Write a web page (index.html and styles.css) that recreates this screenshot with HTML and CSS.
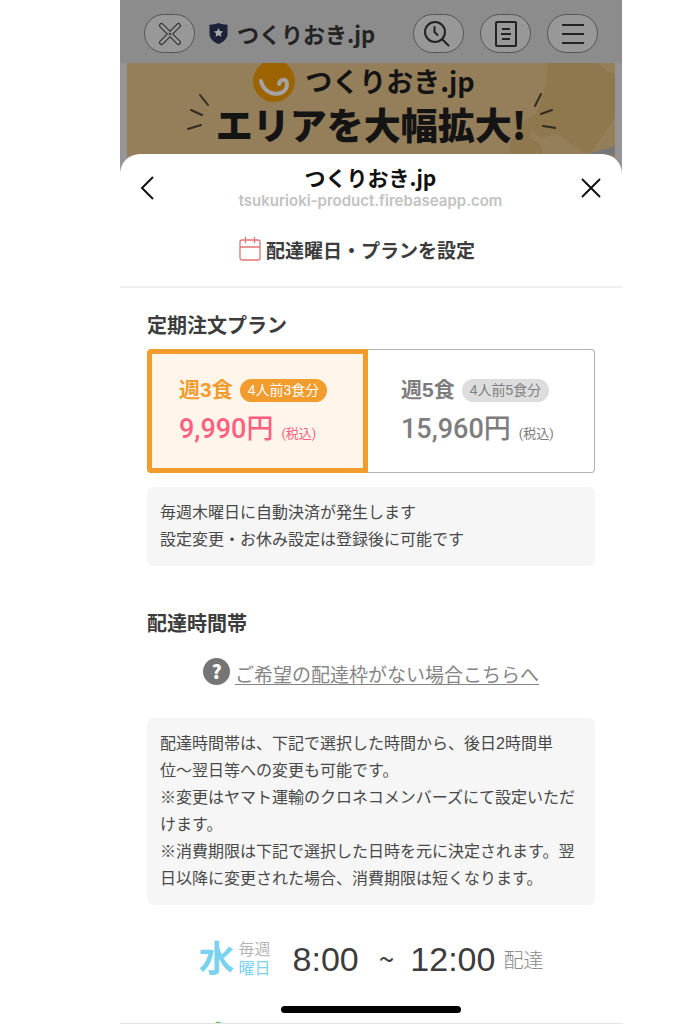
FILE: index.html
```html
<!DOCTYPE html>
<html lang="ja">
<head>
    <meta charset="UTF-8">
    <meta name="viewport" content="width=device-width, initial-scale=1.0">
    <title>つくりおき.jp</title>
    <link rel="stylesheet" href="styles.css">
</head>
<body>
    <div class="phone">
        <!-- 背面のページ -->
        <header class="topbar">
            <button class="pill" aria-label="閉じる">
                <svg width="24" height="24" viewBox="0 0 24 24" fill="none" stroke-linecap="round">
                    <path d="M3.500 3.500l17 17M20.500 3.500l-17 17" stroke="#333" stroke-width="5"/>
                    <path d="M3.500 3.500l17 17M20.500 3.500l-17 17" stroke="#9c9c9c" stroke-width="2.600"/>
                    <path d="M11 11l2 2M13 11l-2 2" stroke="#333" stroke-width="1"/>
                </svg>
            </button>
            <svg class="shield" width="19" height="21" viewBox="0 0 19 21">
                <path d="M9.500 0C12 1 15 1.500 18.500 1.800V11c0 4.500-4 8-9 10C4.500 19 .5 15.500.5 11V1.800C4 1.500 7 1 9.500 0z" fill="#1c2238"/>
                <path d="M9.500 5l1.400 3 3.300.4-2.400 2.200.6 3.200-2.900-1.600-2.900 1.600.6-3.200-2.400-2.200 3.300-.4z" fill="#aaa"/>
            </svg>
            <div class="site">つくりおき.jp</div>
            <button class="pill" aria-label="履歴検索">
                <svg width="30" height="26" viewBox="0 0 30 26" fill="none" stroke="#222" stroke-width="2" stroke-linecap="round">
                    <circle cx="11" cy="11" r="10"/>
                    <path d="M18.500 18.500l6 6M10.500 6v5l3 3"/>
                </svg>
            </button>
            <button class="pill" aria-label="注文一覧">
                <svg width="22" height="26" viewBox="0 0 22 26" fill="none" stroke="#222" stroke-width="2">
                    <rect x="1" y="1" width="20" height="24" rx="1"/>
                    <path d="M7 8h8M6 13h10M7 18h8"/>
                </svg>
            </button>
            <button class="pill" aria-label="メニュー">
                <svg width="22" height="22" viewBox="0 0 22 22" fill="none" stroke="#222" stroke-width="2">
                    <path d="M0 2h22M0 11h22M0 20h22"/>
                </svg>
            </button>
        </header>

        <div class="banner-wrap">
            <div class="banner">
                <svg class="banner-map" width="140" height="92" viewBox="0 0 140 92">
                    <path d="M72 0h50l10 8 8 3v44l-23 33-7 3-27-20-17 4-9-7-4 8c8 0 14 6 14 13l-2 11H36c-3-10-3-24 8-29-1-9 5-15 16-19 6-10 11-26 12-44z" fill="#8f774e"/>
                    <path d="M108 92l32-9v9z" fill="#777"/>
                </svg>
                <div class="banner-logo">
                    <svg width="42" height="42" viewBox="0 0 42 42">
                        <circle cx="21" cy="21" r="21" fill="#9c6400"/>
                        <path d="M8 21c3 16 26 17 26 3 0-6-7-5-8 0" fill="none" stroke="#a3a3a3" stroke-width="4" stroke-linecap="round"/>
                    </svg>
                    <span>つくりおき.jp</span>
                </div>
                <div class="banner-copy">
                    <svg width="24" height="38" viewBox="0 0 24 38" fill="none" stroke="#332c20" stroke-width="2" stroke-linecap="round">
                        <path d="M14 2l8 10M5 17l11 5M2 36l13-4"/>
                    </svg>
                    <span>エリアを大幅拡大!</span>
                    <svg width="24" height="38" viewBox="0 0 24 38" fill="none" stroke="#332c20" stroke-width="2" stroke-linecap="round">
                        <path d="M9 1L3 13M9 21l11-4M11 33l13 2"/>
                    </svg>
                </div>
            </div>
        </div>

        <!-- 前面のシート -->
        <main class="sheet">
            <div class="sheet-head">
                <button class="plain" aria-label="戻る">
                    <svg width="20" height="24" viewBox="0 0 20 24" fill="none" stroke="#111" stroke-width="2"><path d="M13 1L2 12l11 11"/></svg>
                </button>
                <div class="sheet-title">
                    <strong>つくりおき.jp</strong>
                    <span>tsukurioki-product.firebaseapp.com</span>
                </div>
                <button class="plain" aria-label="閉じる">
                    <svg width="20" height="20" viewBox="0 0 20 20" fill="none" stroke="#111" stroke-width="2"><path d="M1 1l18 18M19 1L1 19"/></svg>
                </button>
            </div>

            <h1>
                <svg width="22" height="24" viewBox="0 0 22 24" fill="none" stroke="#e27373" stroke-width="1.300">
                    <rect x="1" y="3" width="20" height="20" rx="2"/>
                    <path d="M1 10h20M6.500 0v6M15.500 0v6"/>
                </svg>
                配達曜日・プランを設定
            </h1>

            <div class="content">
                <h2>定期注文プラン</h2>
                <div class="plans">
                    <button class="plan selected">
                        <span class="plan-name">週3食 <span class="tag">4人前3食分</span></span>
                        <span class="price">9,990円 <small>(税込)</small></span>
                    </button>
                    <button class="plan">
                        <span class="plan-name">週5食 <span class="tag">4人前5食分</span></span>
                        <span class="price">15,960円 <small>(税込)</small></span>
                    </button>
                </div>
                <p class="note">毎週木曜日に自動決済が発生します<br>設定変更・お休み設定は登録後に可能です</p>

                <h2 class="time-title">配達時間帯</h2>
                <div class="help">
                    <span class="question">?</span>
                    <a href="#">ご希望の配達枠がない場合こちらへ</a>
                </div>
                <p class="note">配達時間帯は、下記で選択した時間から、後日2時間単<br>位〜翌日等への変更も可能です。<br>※変更はヤマト運輸のクロネコメンバーズにて設定いただけます。<br>※消費期限は下記で選択した日時を元に決定されます。翌日以降に変更された場合、消費期限は短くなります。</p>

                <div class="slot">
                    <span class="day">水</span>
                    <span class="weekly">毎週<b>曜日</b></span>
                    <span class="time">8:00</span>
                    <span class="tilde">~</span>
                    <span class="time">12:00</span>
                    <span class="deliver">配達</span>
                </div>
                <div class="slot next">
                    <span class="day">木</span>
                </div>
            </div>
        </main>
        <div class="home-bar"></div>
    </div>
</body>
</html>
```
FILE: styles.css
```css
* {
    margin: 0;
    padding: 0;
    box-sizing: border-box;
}

body {
    font-family: "Noto Sans CJK JP", sans-serif;
    color: #3c3c3c;
    background: #fff;
    padding: 0 61px 0 120px;
}

button {
    font-family: inherit;
    cursor: pointer;
}

svg {
    display: block;
    flex-shrink: 0;
}

.phone {
    position: relative;
    height: 100vh;
    overflow: hidden;
    background: #959595;
    border-bottom: 1px solid #e4e4e4;
}

/* 上部バー */
.topbar {
    display: flex;
    align-items: center;
    height: 63px;
    padding: 4px 24px 0;
    gap: 16px;
    background: #8c8c8c;
}

.pill {
    display: flex;
    align-items: center;
    justify-content: center;
    flex-shrink: 0;
    width: 51px;
    height: 39px;
    border: 1px solid #555;
    border-radius: 20px;
    background: #989898;
}

.shield {
    margin: 0 -7px 0 -2px;
}

.site {
    flex: 1;
    padding-bottom: 2px;
    font-size: 22px;
    font-weight: 700;
    line-height: 30px;
    color: #242424;
    white-space: nowrap;
}

/* バナー */
.banner-wrap {
    padding: 0 7px;
}

.banner {
    position: relative;
    height: 110px;
    margin-bottom: -19px;
    overflow: hidden;
    background: #957f5b;
    color: #141414;
}

.banner-map {
    position: absolute;
    top: 0;
    right: 0;
}

.banner-logo,
.banner-copy {
    position: relative;
    display: flex;
    justify-content: center;
    align-items: center;
}

.banner-logo {
    height: 36px;
    gap: 10px;
    padding-right: 14px;
    font-size: 27px;
    font-weight: 700;
    line-height: 36px;
}

.banner-copy {
    height: 50px;
    gap: 6px;
    font-size: 37px;
    font-weight: 900;
    line-height: 48px;
    white-space: nowrap;
}

.banner-copy svg {
    margin-bottom: 24px;
}

/* シート */
.sheet {
    position: relative;
    min-height: 100%;
    border-radius: 20px 20px 0 0;
    background: #fff;
}

.sheet-head {
    display: flex;
    align-items: center;
    justify-content: space-between;
    height: 66px;
    padding: 2px 21px 0 20px;
}

.plain {
    border: none;
    background: none;
}

.sheet-title {
    text-align: center;
}

.sheet-title strong {
    display: block;
    font-size: 21px;
    line-height: 26px;
    color: #111;
}

.sheet-title span {
    display: block;
    font-family: Inter, sans-serif;
    font-size: 15px;
    font-weight: 600;
    line-height: 22px;
    color: #c2c2c2;
}

h1 {
    display: flex;
    justify-content: center;
    align-items: center;
    gap: 5px;
    height: 68px;
    padding: 0 28px 8px 0;
    border-bottom: 2px solid #f0f0f0;
    font-size: 19px;
    font-weight: 700;
}

.content {
    padding: 22px 27px 0;
}

h2 {
    font-size: 20px;
    font-weight: 700;
    line-height: 30px;
}

.plans {
    display: grid;
    grid-template-columns: 221px 1fr;
    margin-top: 9px;
}

.plan {
    height: 124px;
    padding: 7px 0 0 33px;
    border: 1px solid #b0b0b0;
    border-left: none;
    border-radius: 0 4px 4px 0;
    background: #fff;
    color: #7d7d7d;
    text-align: left;
}

.plan.selected {
    padding-left: 27px;
    border: 5px solid #f29c2e;
    border-radius: 4px 0 0 4px;
    background: #fff5ea;
    color: #f29c2e;
}

.plan-name {
    display: flex;
    align-items: center;
    gap: 7px;
    font-family: "Liberation Sans", "Noto Sans CJK JP", sans-serif;
    font-size: 21px;
    font-weight: 700;
    line-height: 30px;
}

.tag {
    padding: 0 8px;
    border-radius: 12px;
    background: #ddd;
    font-size: 14px;
    font-weight: 400;
    line-height: 23px;
}

.selected .tag {
    background: #f29c2e;
    color: #fff;
}

.price {
    display: flex;
    align-items: baseline;
    gap: 8px;
    margin-top: 4px;
    font-family: Roboto, "Noto Sans CJK JP", sans-serif;
    font-size: 27px;
    font-weight: 500;
    line-height: 40px;
}

.price small {
    font-size: 13px;
    font-weight: 400;
}

.selected .price {
    color: #ff5f80;
}

.note {
    margin-top: 14px;
    padding: 12px 13px 13px;
    border-radius: 6px;
    background: #f6f6f6;
    color: #484848;
    font-family: "Liberation Sans", "Noto Sans CJK JP", sans-serif;
    font-size: 16px;
    line-height: 27px;
}

.time-title {
    margin-top: 42px;
}

.help {
    display: flex;
    justify-content: center;
    align-items: center;
    gap: 5px;
    height: 66px;
}

.help a {
    padding-top: 5px;
    color: #858585;
    font-size: 19px;
    text-underline-offset: 2px;
}

.question {
    width: 27px;
    height: 27px;
    border-radius: 50%;
    background: #757575;
    color: #fff;
    font-size: 19px;
    font-weight: 900;
    line-height: 26px;
    text-align: center;
}

/* 配達枠 */
.slot {
    display: flex;
    justify-content: center;
    align-items: center;
    height: 81px;
    margin-top: 12px;
}

.day {
    padding-bottom: 4px;
    color: #7bd2ef;
    font-size: 36px;
    font-weight: 700;
    line-height: 36px;
}

.weekly {
    margin: 0 22px 0 4px;
    color: #b5b5b5;
    font-size: 16px;
    line-height: 19px;
}

.weekly b {
    display: block;
    color: #7bd2ef;
    font-weight: 400;
}

.time {
    padding-top: 3px;
    font-family: "Liberation Sans", sans-serif;
    font-size: 34px;
}

.tilde {
    margin: 0 16px 0 20px;
    font-size: 28px;
}

.deliver {
    margin-left: 8px;
    padding-top: 3px;
    color: #888;
    font-size: 20px;
    font-weight: 300;
}

.next {
    justify-content: flex-start;
    margin-top: 0;
    padding-left: 53px;
}

.next .day {
    color: #6cbf6c;
}

/* ホームバー */
.home-bar {
    position: absolute;
    bottom: 10px;
    left: 50%;
    width: 180px;
    height: 7px;
    margin-left: -90px;
    border-radius: 4px;
    background: #000;
}
```
